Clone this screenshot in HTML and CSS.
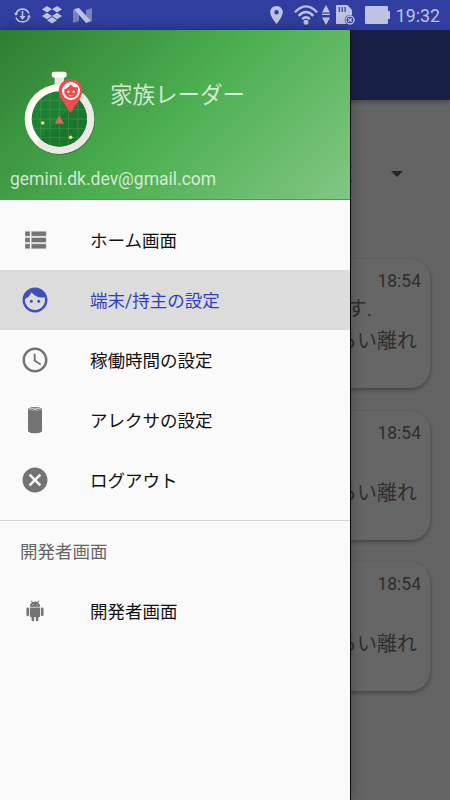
FILE: index.html
```html
<!DOCTYPE html>
<html lang="ja">
<head>
  <meta charset="utf-8">
  <title>家族レーダー</title>
  <link rel="stylesheet" href="styles.css">
</head>
<body>
  <div class="status-bar">
    <div class="status-left">
      <svg class="icon-sync" viewBox="0 0 17 17" fill="none" stroke="currentColor" stroke-width="1.6">
        <path d="M2 6.500A7 7 0 0 1 15 6.500M15 10.500A7 7 0 0 1 2 10.500M8.500 4v7"/>
        <path d="M5.500 9h6l-3 4zM0 6h4l-2 3zM13 10.500h4l-2-3z" fill="currentColor" stroke="none"/>
      </svg>
      <svg class="icon-dropbox" viewBox="0 0 20 18" fill="currentColor">
        <path d="M5 0l5 3.200-5 3.200L0 3.200zM15 0l5 3.200-5 3.200-5-3.200zM5 6.800l5 3.200-5 3.200L0 10zM15 6.800l5 3.200-5 3.200-5-3.200zM10 11l5 3.200-5 3.300-5-3.300z"/>
      </svg>
      <svg class="icon-nougat" viewBox="0 0 19 15" fill="currentColor">
        <path opacity=".5" d="M0 2l6-2v13l-6 2zM13 2l6-2v13l-6 2z"/>
        <path d="M1 1l5-1 12 13-5 2z"/>
      </svg>
    </div>
    <div class="status-right">
      <svg class="icon-place" viewBox="5 2 14 20" fill="currentColor">
        <path d="M12 2C8.130 2 5 5.130 5 9c0 5.250 7 13 7 13s7-7.750 7-13c0-3.870-3.130-7-7-7zm0 9.500a2.500 2.500 0 0 1 0-5 2.500 2.500 0 0 1 0 5z"/>
      </svg>
      <svg class="icon-wifi" viewBox="0 0 24 20" fill="none" stroke="currentColor" stroke-width="2.400">
        <path d="M1 7.300Q12-4.500 23 7.300M4.700 10.800Q12 3.300 19.300 10.800M8.200 14.200Q12 10.300 15.800 14.200"/>
        <circle cx="12" cy="17.300" r="2.500" fill="currentColor" stroke="none"/>
      </svg>
      <svg class="icon-traffic" viewBox="0 0 8 20" fill="currentColor">
        <path d="M4 0l4 7.500H0zM0 8.700h8v1.200H0zM0 12.500h8L4 20z"/>
      </svg>
      <svg class="icon-sd" viewBox="0 0 19 20">
        <path fill="currentColor" d="M1 0h10.500L16 5v14H0V1a1 1 0 0 1 1-1z"/>
        <path stroke="#303f9f" stroke-width="1.200" d="M3.300 2v5M6.200 2v5M9.100 2v5"/>
        <circle cx="14" cy="15" r="5.300" fill="#303f9f"/>
        <circle cx="14" cy="15" r="4" fill="none" stroke="currentColor" stroke-width="1.400"/>
        <path stroke="currentColor" stroke-width="1.400" d="M12.200 13.200l3.600 3.600M15.800 13.200l-3.600 3.600"/>
      </svg>
      <svg class="icon-battery" viewBox="0 0 25 18" fill="currentColor">
        <path d="M1 0h21a1 1 0 0 1 1 1v4h2v8h-2v4a1 1 0 0 1-1 1H1a1 1 0 0 1-1-1V1a1 1 0 0 1 1-1z"/>
      </svg>
      <span class="clock">19:32</span>
    </div>
  </div>

  <div class="screen">
    <div class="app-bar"></div>
    <div class="spinner">
      <span class="spinner-value">E</span>
      <span class="spinner-arrow"></span>
    </div>
    <div class="messages">
      <div class="message">
        <div class="message-time">18:54</div>
        <div class="message-line message-line-short">います.</div>
        <div class="message-line">くらい離れ</div>
      </div>
      <div class="message">
        <div class="message-time">18:54</div>
        <div class="message-line"></div>
        <div class="message-line">くらい離れ</div>
      </div>
      <div class="message">
        <div class="message-time">18:54</div>
        <div class="message-line"></div>
        <div class="message-line">くらい離れ</div>
      </div>
    </div>

    <div class="scrim"></div>

    <nav class="drawer">
      <div class="drawer-header">
        <div class="brand">
          <svg class="logo" viewBox="0 0 270 285">
            <defs>
              <clipPath id="dial"><circle cx="133" cy="162" r="83"/></clipPath>
            </defs>
            <circle cx="136" cy="166" r="104" fill="#1b5e20" opacity=".4"/>
            <path fill="#e9e5df" d="M119 36h28v20l20 12H99l20-12z"/>
            <rect x="110" y="20" width="45" height="18" rx="7" fill="#fffdf6"/>
            <circle cx="133" cy="162" r="104" fill="#fffdf6"/>
            <path d="M207 88A104 104 0 0 1 60 236z" fill="#ece8e3"/>
            <circle cx="133" cy="162" r="83" fill="#1f8132"/>
            <g clip-path="url(#dial)">
              <path fill="#1b752d" d="M216 79v166H50z"/>
              <path stroke="#62a958" stroke-width="2" opacity=".6" d="M77 79v166M105 79v166M133 79v166M161 79v166M189 79v166M50 106h166M50 134h166M50 162h166M50 190h166M50 218h166"/>
            </g>
            <path fill="#dd6264" d="M133 151l14 25h-28z"/>
            <circle cx="83" cy="174" r="5.500" fill="#eee96c"/>
            <circle cx="167" cy="217" r="5.500" fill="#eee96c"/>
            <path fill="#f14b4d" d="M167 42c-20 0-36 16-36 36 0 23 24 43 36 66 12-23 35-43 35-66 0-20-15-36-35-36z"/>
            <circle cx="168" cy="78" r="27" fill="#fff"/>
            <path fill="#ef4b4d" d="M148 73q13-4 18-15 10 12 23 8l-1 19q-6 14-20 14t-20-14z"/>
            <circle cx="160" cy="80" r="3.500" fill="#fff"/>
            <circle cx="176" cy="80" r="3.500" fill="#fff"/>
            <path d="M161 90q7 5 14 0" fill="none" stroke="#fff" stroke-width="2"/>
          </svg>
          <span class="brand-name">家族レーダー</span>
        </div>
        <div class="account">gemini.dk.dev@gmail.com</div>
      </div>

      <ul class="menu">
        <li class="menu-item">
          <svg class="menu-icon" viewBox="0 0 24 24"><path d="M4 14h4v-4H4v4zm0 5h4v-4H4v4zM4 9h4V5H4v4zm5 5h12v-4H9v4zm0 5h12v-4H9v4zM9 5v4h12V5H9z" stroke="#fafafa" stroke-width=".3"/></svg>
          <span>ホーム画面</span>
        </li>
        <li class="menu-item selected">
          <svg class="menu-icon" viewBox="0 0 24 24"><path d="M9 11.750a1.250 1.250 0 1 0 0 2.500 1.250 1.250 0 0 0 0-2.500zm6 0a1.250 1.250 0 1 0 0 2.500 1.250 1.250 0 0 0 0-2.500zM12 2C6.480 2 2 6.480 2 12s4.480 10 10 10 10-4.480 10-10S17.520 2 12 2zm0 18c-4.410 0-8-3.590-8-8 0-.290.020-.580.050-.860 2.360-1.050 4.230-2.980 5.210-5.370C11.070 8.330 14.050 10 17.420 10c.780 0 1.530-.090 2.250-.260.210.710.330 1.470.330 2.260 0 4.410-3.590 8-8 8z"/></svg>
          <span>端末/持主の設定</span>
        </li>
        <li class="menu-item">
          <svg class="menu-icon" viewBox="0 0 24 24"><path d="M11.990 2C6.470 2 2 6.480 2 12s4.470 10 9.990 10C17.520 22 22 17.520 22 12S17.520 2 11.990 2zM12 20c-4.420 0-8-3.580-8-8s3.580-8 8-8 8 3.580 8 8-3.580 8-8 8zm.5-13H11v6l5.250 3.150.750-1.230-4.500-2.670z"/></svg>
          <span>稼働時間の設定</span>
        </li>
        <li class="menu-item">
          <svg class="menu-icon" viewBox="0 0 30 30">
            <path d="M8 4.500C8 1 22 1 22 4.500V26c0 3-14 3-14 0z"/>
            <ellipse cx="15" cy="4.300" rx="6" ry="1.500" fill="#d8d8d8"/>
            <path d="M10.500 3.900h3v1h-3zM16.500 3.900h3v1h-3zM13.500 2.900h3v.7h-3zM13.500 5h3v.7h-3z"/>
          </svg>
          <span>アレクサの設定</span>
        </li>
        <li class="menu-item">
          <svg class="menu-icon" viewBox="0 0 24 24"><path d="M12 2C6.470 2 2 6.470 2 12s4.470 10 10 10 10-4.470 10-10S17.530 2 12 2zm5 13.590L15.590 17 12 13.410 8.410 17 7 15.590 10.590 12 7 8.410 8.410 7 12 10.590 15.590 7 17 8.410 13.410 12 17 15.590z"/></svg>
          <span>ログアウト</span>
        </li>
      </ul>

      <div class="menu-group">開発者画面</div>
      <ul class="submenu">
        <li class="menu-item">
          <svg class="menu-icon" viewBox="-5.500 -5.500 35 35"><path d="M6 18c0 .55.45 1 1 1h1v3.500c0 .83.67 1.500 1.500 1.500s1.500-.67 1.500-1.500V19h2v3.500c0 .83.67 1.500 1.500 1.500s1.500-.67 1.500-1.500V19h1c.55 0 1-.45 1-1V8H6v10zM3.500 8C2.670 8 2 8.670 2 9.500v7c0 .83.67 1.500 1.500 1.500S5 17.330 5 16.500v-7C5 8.670 4.330 8 3.500 8zm17 0c-.83 0-1.500.67-1.500 1.500v7c0 .83.67 1.500 1.500 1.500s1.500-.67 1.500-1.500v-7c0-.83-.67-1.500-1.500-1.500zm-4.970-5.840l1.300-1.300c.2-.2.2-.51 0-.71-.2-.2-.51-.2-.71 0l-1.480 1.480C13.850 1.230 12.950 1 12 1c-.96 0-1.860.23-2.660.63L7.850.15c-.2-.2-.51-.2-.71 0-.2.2-.2.51 0 .71l1.310 1.310C6.970 3.260 6 5.010 6 7h12c0-1.990-.97-3.750-2.470-4.840zM10 5H9V4h1v1zm5 0h-1V4h1v1z"/></svg>
          <span>開発者画面</span>
        </li>
      </ul>
    </nav>
  </div>
</body>
</html>
```
FILE: styles.css
```css
body {
  margin: 0;
  height: 800px;
  display: flex;
  flex-direction: column;
  overflow: hidden;
  font-family: Roboto, "Noto Sans CJK JP", sans-serif;
  font-size: 17.5px;
  background: #fafafa;
}
svg {
  display: block;
  flex-shrink: 0;
}

/* Status bar */
.status-bar {
  box-sizing: border-box;
  height: 30px;
  padding: 0 10px 0 14px;
  display: flex;
  justify-content: space-between;
  background: #303f9f;
  color: #bfc3e3;
}
.status-left, .status-right {
  display: flex;
  align-items: center;
}
.status-left {
  gap: 11px;
}
.icon-sync {
  width: 17px;
  height: 17px;
}
.icon-dropbox {
  width: 20px;
  height: 18px;
}
.icon-nougat {
  width: 19px;
  height: 15px;
}
.icon-place {
  width: 13px;
  height: 18px;
  margin-right: 11px;
}
.icon-wifi {
  width: 24px;
  height: 20px;
  margin-right: 4px;
}
.icon-traffic {
  width: 8px;
  height: 20px;
  margin-right: 6px;
}
.icon-sd {
  width: 19px;
  height: 20px;
  margin-right: 10px;
}
.icon-battery {
  width: 25px;
  height: 18px;
  margin-right: 6px;
}
.clock {
  padding-top: 2px;
  font-size: 17.8px;
  line-height: 30px;
}

/* Screen behind the drawer */
.screen {
  position: relative;
  flex: 1;
  color: #757575;
}
.app-bar {
  height: 70px;
  background: #3f51b5;
  box-shadow: 0 2px 5px rgba(0, 0, 0, 0.3);
}
.spinner {
  height: 149px;
  padding: 0 47px 1px 0;
  box-sizing: border-box;
  display: flex;
  align-items: center;
  justify-content: flex-end;
}
.spinner-value {
  margin-right: 39px;
  font-size: 22px;
  color: #212121;
}
.spinner-arrow {
  border: 6px solid transparent;
  border-top-color: #616161;
  border-bottom: 0;
}
.messages {
  padding: 10px 20px;
  display: flex;
  flex-direction: column;
  gap: 22.5px;
}
.message {
  box-sizing: border-box;
  height: 129px;
  padding: 10px 9px 0 20px;
  border-radius: 20px;
  background: #fff;
  box-shadow: 0 2px 4px rgba(0, 0, 0, 0.35);
  text-align: right;
}
.message-time {
  line-height: 24px;
}
.message-line {
  height: 32px;
  padding-right: 4px;
  font-size: 20px;
  line-height: 32px;
}
.message-line-short {
  padding-right: 49px;
}
.scrim {
  position: absolute;
  inset: 0;
  background: rgba(0, 0, 0, 0.6);
}

/* Drawer */
.drawer {
  position: absolute;
  top: 0;
  bottom: 0;
  left: 0;
  width: 350px;
  background: #fafafa;
  border-right: 1px solid #080808;
  box-shadow: 0 0 12px rgba(0, 0, 0, 0.3);
}
.drawer-header {
  box-sizing: border-box;
  height: 170px;
  padding-top: 35px;
  background: linear-gradient(135deg, #2e7d32, #4caf50 50%, #81c784);
  border-bottom: 1px solid #39a83c;
  color: rgba(255, 255, 255, 0.75);
}
.brand {
  display: flex;
  padding-left: 15px;
}
.logo {
  width: 90px;
  height: 95px;
}
.brand-name {
  margin-left: 5px;
  font-size: 22.5px;
  line-height: 60px;
}
.account {
  padding-left: 10px;
  line-height: 38px;
}
.menu, .submenu {
  margin: 0;
  padding: 0;
  list-style: none;
}
.menu {
  padding: 10px 0;
  border-bottom: 1px solid #d4d4d4;
}
.menu-item {
  display: flex;
  align-items: center;
  gap: 40px;
  height: 60px;
  padding-left: 20px;
  font-size: 17.5px;
  color: #111;
}
.menu-item span {
  padding-bottom: 2px;
}
.menu-item.selected {
  background: #dcdcdc;
  color: #303fbf;
}
.menu-icon {
  width: 30px;
  height: 30px;
  fill: #737373;
}
.selected .menu-icon {
  fill: #3f51b5;
}
.menu-group {
  box-sizing: border-box;
  height: 60px;
  padding: 1px 0 0 20px;
  font-size: 17.5px;
  line-height: 60px;
  color: #666;
}
```
